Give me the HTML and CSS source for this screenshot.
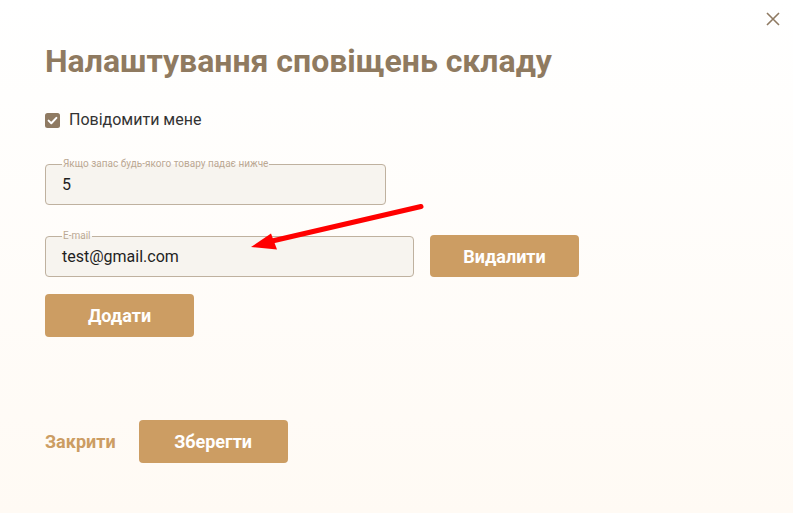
FILE: index.html
```html
<!DOCTYPE html>
<html lang="uk">
<head>
<meta charset="utf-8">
<link rel="stylesheet" href="styles.css">
</head>
<body>
<div class="dialog">
  <button class="close" aria-label="close">
    <svg width="14" height="14" viewBox="0 0 14 14"><path d="M1 1 L13 13 M13 1 L1 13" stroke="#8f7a62" stroke-width="1.6" fill="none"/></svg>
  </button>
  <h1 class="title">Налаштування сповіщень складу</h1>
  <label class="check-row">
    <span class="checkbox">
      <svg width="15" height="15" viewBox="0 0 15 15"><rect x="0" y="0" width="15" height="15" rx="2.5" fill="#8f7a62"/><path d="M3.6 7.6 L6.3 10.2 L11.4 4.9" stroke="#fff" stroke-width="2" fill="none" stroke-linecap="round" stroke-linejoin="round"/></svg>
    </span>
    <span class="check-label">Повідомити мене</span>
  </label>
  <fieldset class="field field-threshold">
    <legend>Якщо запас будь-якого товару падає нижче</legend>
    <div class="value">5</div>
  </fieldset>
  <div class="email-row">
    <fieldset class="field field-email">
      <legend>E-mail</legend>
      <div class="value">test@gmail.com</div>
    </fieldset>
    <button class="btn btn-delete">Видалити</button>
  </div>
  <button class="btn btn-add">Додати</button>
  <div class="footer">
    <button class="link-close">Закрити</button>
    <button class="btn">Зберегти</button>
  </div>
  <svg class="arrow" width="793" height="513" viewBox="0 0 793 513">
    <line x1="421" y1="206.5" x2="270" y2="241.5" stroke="#ff0000" stroke-width="5" stroke-linecap="round"/>
    <polygon points="251,247 271,233.5 277,249.5" fill="#ff0000"/>
  </svg>
</div>
</body>
</html>
```
FILE: styles.css
```css
* { box-sizing: border-box; }
html, body { margin: 0; padding: 0; }
body {
  width: 793px;
  height: 513px;
  overflow: hidden;
  font-family: Roboto, "Liberation Sans", sans-serif;
}
.dialog {
  position: relative;
  width: 793px;
  height: 513px;
  padding: 41px 0 0 45px;
  background: linear-gradient(180deg, #ffffff 0%, #fffaf4 100%);
  display: flex;
  flex-direction: column;
  align-items: flex-start;
}
.close {
  position: absolute;
  top: 11px;
  right: 12px;
  width: 16px;
  height: 16px;
  padding: 1px;
  border: 0;
  background: none;
  display: flex;
}
.title {
  margin: 0;
  font-size: 32px;
  line-height: 40px;
  font-weight: 700;
  color: #8f7a60;
}
.check-row {
  margin-top: 29px;
  display: flex;
  align-items: center;
  height: 20px;
  gap: 9px;
}
.checkbox { display: flex; width: 15px; height: 15px; }
.check-label {
  font-size: 16px;
  line-height: 20px;
  color: #333333;
}
.field {
  margin: 0;
  border: 1px solid #bfb19f;
  border-radius: 4px;
  background: #f7f4ef;
  padding: 0 16px 8px;
  min-width: 0;
}
.field legend {
  padding: 0 1px;
  margin-left: 0;
  font-size: 10px;
  line-height: 12px;
  color: #bba893;
}
.value {
  height: 26px;
  padding-top: 4px;
  font-size: 16px;
  line-height: 22px;
  color: #1f1f1f;
}
.field-threshold {
  margin-top: 28px;
  width: 341px;
}
.email-row {
  margin-top: 25px;
  display: flex;
  align-items: flex-start;
  gap: 16px;
}
.field-email { width: 369px; }
.btn {
  width: 149px;
  height: 43px;
  border: 0;
  border-radius: 4px;
  background: #cc9d63;
  color: #ffffff;
  font-family: Roboto, "Liberation Sans", sans-serif;
  font-size: 18px;
  font-weight: 700;
  padding: 0;
}
.btn-delete { margin-top: 5px; height: 42px; }
.btn-add { margin-top: 17px; }
.footer {
  margin-top: 83px;
  display: flex;
  align-items: center;
  gap: 23px;
}
.link-close {
  border: 0;
  background: none;
  padding: 0;
  font-family: Roboto, "Liberation Sans", sans-serif;
  font-size: 18px;
  font-weight: 700;
  color: #cc9d63;
}
.arrow {
  position: absolute;
  left: 0;
  top: 0;
  pointer-events: none;
}
```
